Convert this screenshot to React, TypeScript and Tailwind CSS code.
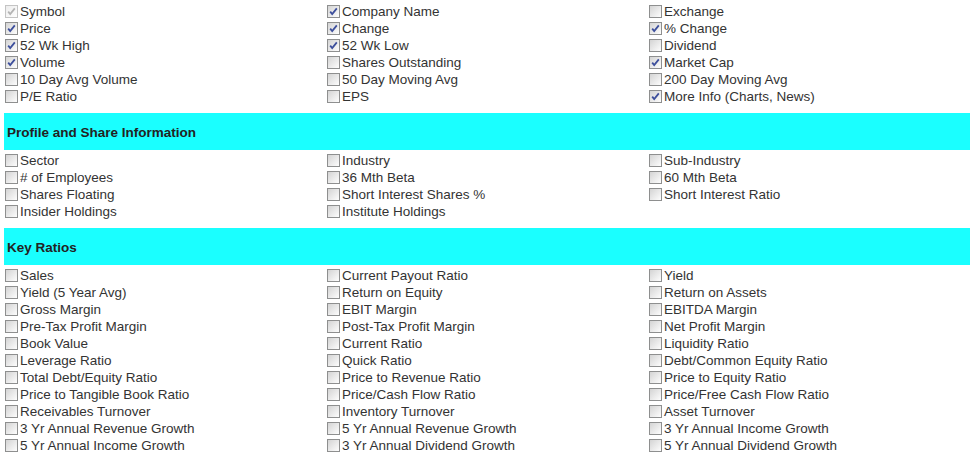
import React from 'react';

type Item = [string, boolean?, boolean?];

const general: Item[] = [
  ['Symbol', true, true], ['Company Name', true], ['Exchange'],
  ['Price', true], ['Change', true], ['% Change', true],
  ['52 Wk High', true], ['52 Wk Low', true], ['Dividend'],
  ['Volume', true], ['Shares Outstanding'], ['Market Cap', true],
  ['10 Day Avg Volume'], ['50 Day Moving Avg'], ['200 Day Moving Avg'],
  ['P/E Ratio'], ['EPS'], ['More Info (Charts, News)', true],
];

const profile: Item[] = [
  ['Sector'], ['Industry'], ['Sub-Industry'],
  ['# of Employees'], ['36 Mth Beta'], ['60 Mth Beta'],
  ['Shares Floating'], ['Short Interest Shares %'], ['Short Interest Ratio'],
  ['Insider Holdings'], ['Institute Holdings'],
];

const ratios: Item[] = [
  ['Sales'], ['Current Payout Ratio'], ['Yield'],
  ['Yield (5 Year Avg)'], ['Return on Equity'], ['Return on Assets'],
  ['Gross Margin'], ['EBIT Margin'], ['EBITDA Margin'],
  ['Pre-Tax Profit Margin'], ['Post-Tax Profit Margin'], ['Net Profit Margin'],
  ['Book Value'], ['Current Ratio'], ['Liquidity Ratio'],
  ['Leverage Ratio'], ['Quick Ratio'], ['Debt/Common Equity Ratio'],
  ['Total Debt/Equity Ratio'], ['Price to Revenue Ratio'], ['Price to Equity Ratio'],
  ['Price to Tangible Book Ratio'], ['Price/Cash Flow Ratio'], ['Price/Free Cash Flow Ratio'],
  ['Receivables Turnover'], ['Inventory Turnover'], ['Asset Turnover'],
  ['3 Yr Annual Revenue Growth'], ['5 Yr Annual Revenue Growth'], ['3 Yr Annual Income Growth'],
  ['5 Yr Annual Income Growth'], ['3 Yr Annual Dividend Growth'], ['5 Yr Annual Dividend Growth'],
];

function Box({ checked, disabled }: { checked?: boolean; disabled?: boolean }) {
  const id = disabled ? 'gd' : 'gn';
  return (
    <svg width="13" height="13" viewBox="0 0 13 13" className="shrink-0">
      <defs>
        <linearGradient id={id} x1="0" y1="0" x2="1" y2="1">
          <stop offset="0" stopColor={disabled ? '#ececec' : '#d2d2d2'} />
          <stop offset="1" stopColor="#ffffff" />
        </linearGradient>
      </defs>
      <rect x="0.5" y="0.5" width="12" height="12" fill={`url(#${id})`} stroke={disabled ? '#c4c4c4' : '#8e8f8f'} />
      {checked && (
        <path
          d="M3.2 6.6 L5.2 9 L9.8 3.4"
          fill="none"
          stroke={disabled ? '#b4b4b4' : '#3d4f9c'}
          strokeWidth="1.8"
        />
      )}
    </svg>
  );
}

function Grid({ items }: { items: Item[] }) {
  return (
    <div className="grid grid-cols-3">
      {items.map(([label, checked, disabled]) => (
        <label key={label} className="flex h-[17px] items-center gap-[2px] pl-[1px]">
          <Box checked={checked} disabled={disabled} />
          <span className="text-[13.5px] leading-[17px] text-[#333333]">{label}</span>
        </label>
      ))}
    </div>
  );
}

function Header({ title }: { title: string }) {
  return (
    <div className="mt-[8px] mb-[2px] flex h-[37px] items-center bg-[#1affff] pl-[3px] pt-[4px]">
      <span className="text-[13.5px] font-bold text-[#222222]">{title}</span>
    </div>
  );
}

export default function App() {
  return (
    <div className="h-[460px] w-[977px] bg-white font-['Liberation_Sans',Arial,sans-serif]">
      <div className="ml-[4px] w-[966px] pt-[3px]">
        <Grid items={general} />
        <Header title="Profile and Share Information" />
        <Grid items={profile} />
        <Header title="Key Ratios" />
        <Grid items={ratios} />
      </div>
    </div>
  );
}
